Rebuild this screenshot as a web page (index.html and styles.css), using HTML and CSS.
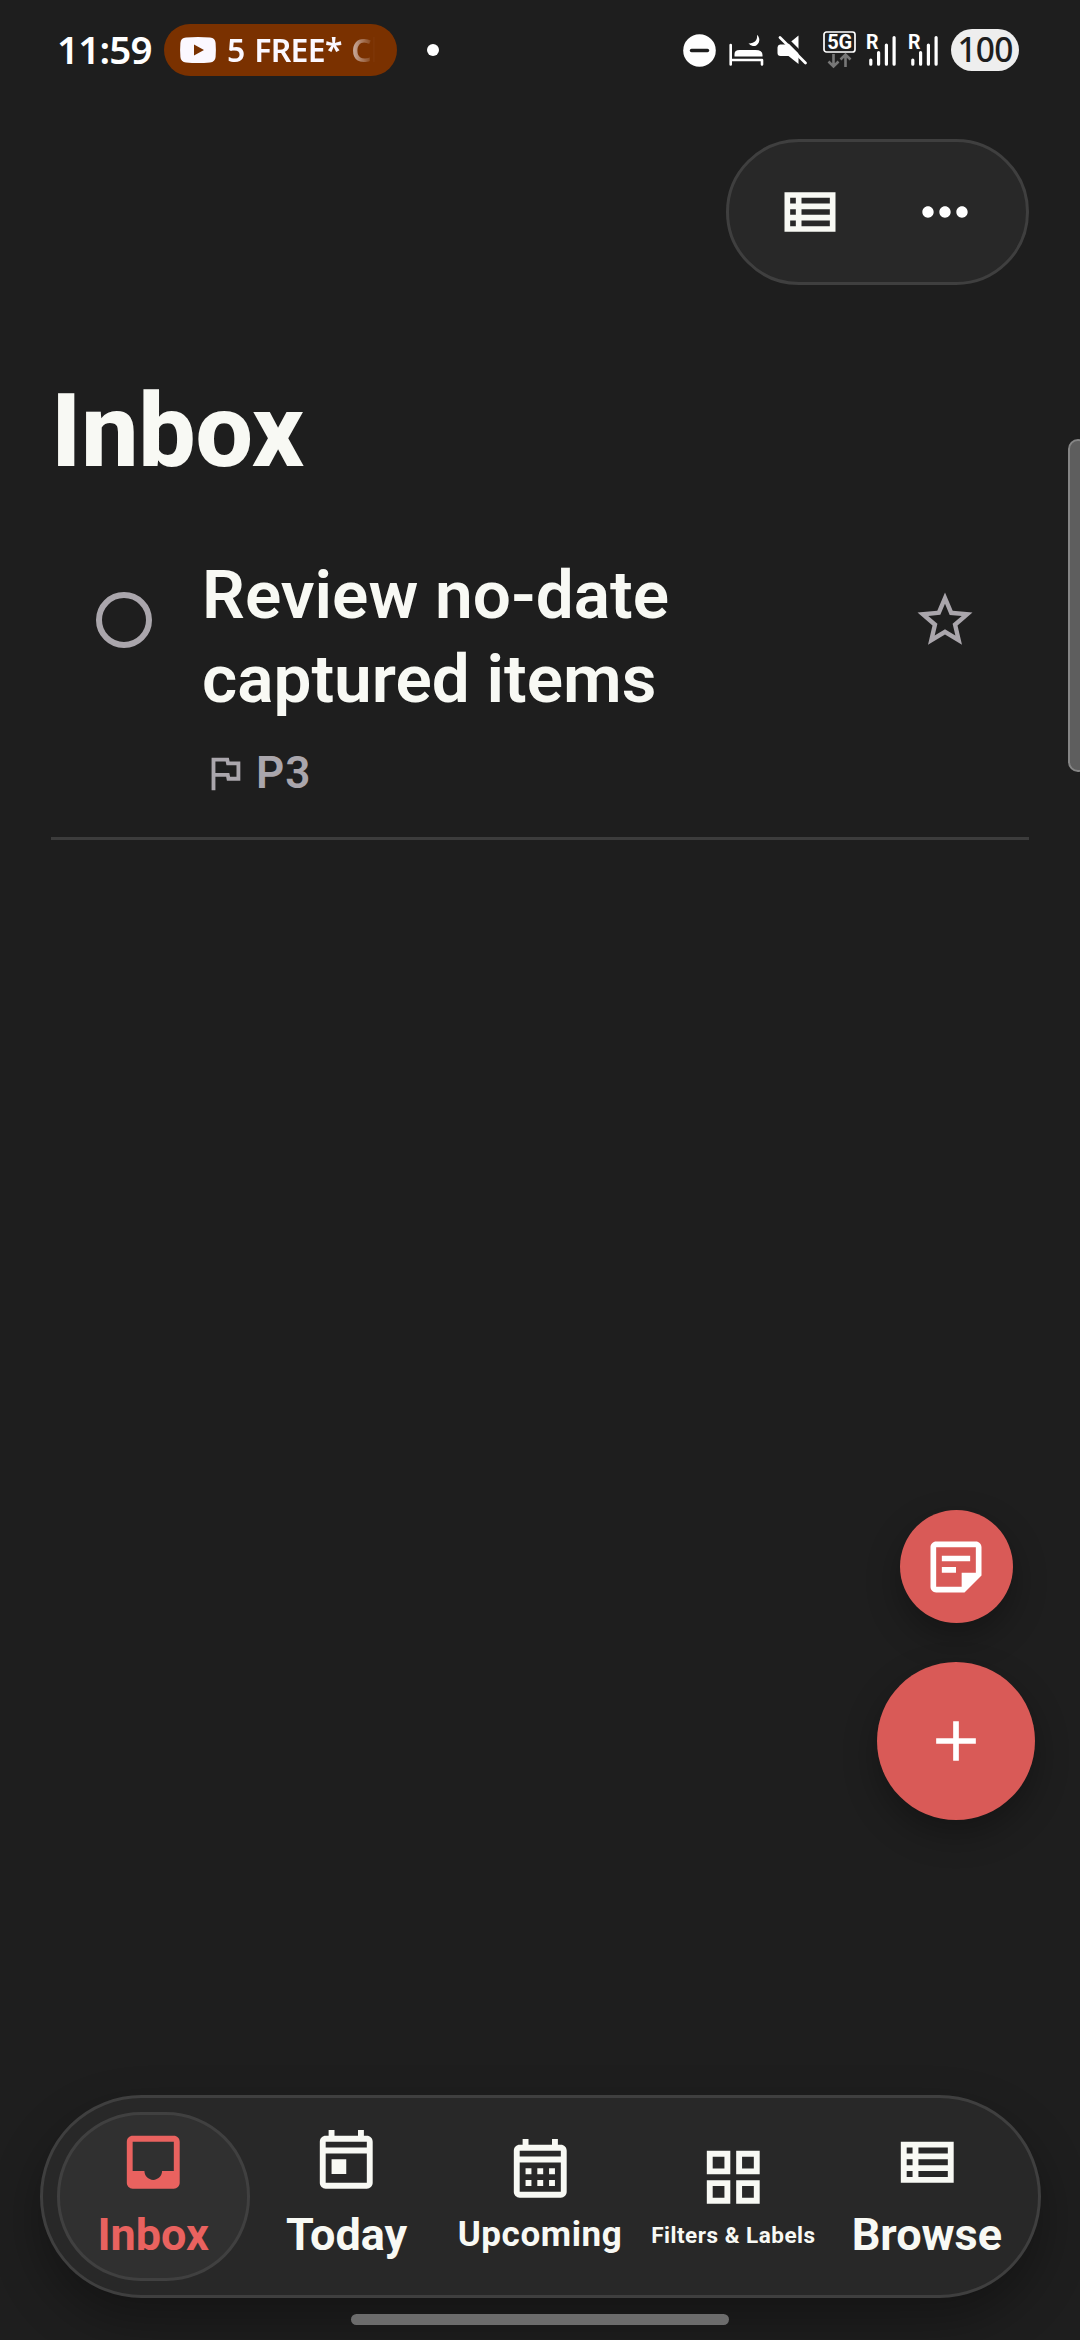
FILE: index.html
```html
<!DOCTYPE html>
<html lang="en">
<head>
<meta charset="utf-8">
<title>Inbox</title>
<link rel="stylesheet" href="styles.css">
</head>
<body>
<div class="screen">
  <header class="status">
    <span class="clock">11:59</span>
    <div class="chip">
      <svg class="chip-icon" viewBox="0 0 36 26"><path fill="#fbf8ff" fill-rule="evenodd" d="M6 .6Q18-.4 30 .6 35.200 1 35.600 6 36.200 13 35.600 20 35.200 25 30 25.400 18 26.400 6 25.400.8 25 .4 20-.2 13 .4 6 .8 1 6 .6zM14 7.500v11l10-5.500z"/></svg>
      <span class="chip-text">5 FREE* Cl</span>
    </div>
    <span class="dot"></span>
    <div class="tray">
      <svg class="dnd" viewBox="0 0 33 33"><circle cx="16.500" cy="16.500" r="16.300" fill="#fff"/><path d="M8.500 16.500h16" stroke="#1e1e1e" stroke-width="3.400" stroke-linecap="round"/></svg>
      <svg class="bed" viewBox="0 0 35 32"><path d="M1.700 11V30.500M1.700 26h31.300M33 26V30.500" fill="none" stroke="#fff" stroke-width="2.600" stroke-linecap="round" stroke-linejoin="round"/><path fill="#fff" d="M5.500 22.500V20q0-4 5-4h16q7 0 7 5v1.500z"/><path fill="#fff" d="M28 .8q3.500 3.500 1.800 7.600-2 4-6 3.600-3-.4-4.300-2.700 4 .5 6.500-1.700 2.500-2.400 2-6.800z"/></svg>
      <svg class="mute" viewBox="0 0 31 31"><path fill="#fff" d="M3 9.500h7.500L21.500.5V29L11.500 21h-8Q.5 21 .5 18v-5.500Q.5 10 3 9.500z"/><path d="M3-2.500 33.500 28" stroke="#1e1e1e" stroke-width="3.400"/><path d="M3 2.500 28.500 28" stroke="#fff" stroke-width="2.800" stroke-linecap="round"/></svg>
      <svg class="net" viewBox="0 0 34 38"><rect x="1" y="1" width="31" height="20" rx="2.500" fill="none" stroke="#fff" stroke-width="1.700"/><text class="net-text" x="16.700" y="17.800" text-anchor="middle">5G</text><path d="M10.500 23v12M5.500 30.500l5 5 5-5M22.500 36V24M17.500 28.500l5-5 5 5" fill="none" stroke="#777" stroke-width="2.600"/></svg>
      <svg class="signal" viewBox="0 0 31 31"><text class="roam" x="0" y="13.500">R</text><path d="M4.800 25v4.200M12.600 17.500v11.700M20.400 10v19.200M28.100 2.500v26.700" stroke="#fff" stroke-width="3.200" stroke-linecap="round"/></svg>
      <svg class="signal second" viewBox="0 0 31 31"><text class="roam" x="0" y="13.500">R</text><path d="M4.800 25v4.200M12.600 17.500v11.700M20.400 10v19.200M28.100 2.500v26.700" stroke="#fff" stroke-width="3.200" stroke-linecap="round"/></svg>
      <span class="battery">100</span>
    </div>
  </header>

  <div class="toolbar">
    <svg class="tool-icon" viewBox="0 0 24 24"><path fill="#f8f9f4" d="M3 5v14h18V5H3zm4 2v2H5V7h2zm-2 6v-2h2v2H5zm0 2h2v2H5v-2zm14 2H9v-2h10v2zm0-4H9v-2h10v2zm0-4H9V7h10v2z"/></svg>
    <svg class="tool-icon" viewBox="0 0 24 24"><path fill="#fff" d="M6 10c-1.100 0-2 .9-2 2s.9 2 2 2 2-.9 2-2-.9-2-2-2zm12 0c-1.100 0-2 .9-2 2s.9 2 2 2 2-.9 2-2-.9-2-2-2zm-6 0c-1.100 0-2 .9-2 2s.9 2 2 2 2-.9 2-2-.9-2-2-2z"/></svg>
  </div>

  <main class="content">
    <h1 class="title">Inbox</h1>
    <article class="task">
      <span class="check"></span>
      <div class="task-body">
        <h2 class="task-title">Review no-date<br>captured items</h2>
        <div class="meta">
          <svg class="flag" viewBox="0 0 24 24"><path fill="#aaa6ac" d="M12.360 6l.4 2H18v6h-3.360l-.4-2H7V6h5.360M14 4H5v17h2v-7h5.600l.4 2h7V6h-5.600L14 4z"/></svg>
          <span class="priority">P3</span>
        </div>
      </div>
      <svg class="star" viewBox="0 0 24 24"><path fill="#aaa6ac" d="M22 9.240l-7.190-.62L12 2 9.190 8.630 2 9.240l5.460 4.730L5.820 21 12 17.270 18.180 21l-1.630-7.030L22 9.240zM12 15.400l-3.760 2.270 1-4.280-3.320-2.880 4.380-.38L12 6.100l1.710 4.040 4.380.38-3.320 2.880 1 4.280L12 15.400z"/></svg>
    </article>
  </main>

  <nav class="tabs">
    <div class="tab active">
      <svg class="tab-icon" viewBox="0 0 24 24"><path fill="currentColor" d="M19 3H5c-1.100 0-2 .9-2 2v14c0 1.100.9 2 2 2h14c1.100 0 2-.9 2-2V5c0-1.100-.9-2-2-2zm0 12h-4c0 1.660-1.350 3-3 3s-3-1.340-3-3H4.990V5H19v10z"/></svg>
      <span class="label">Inbox</span>
    </div>
    <div class="tab">
      <svg class="tab-icon" viewBox="0 0 24 24"><path fill="currentColor" d="M19 3h-1V1h-2v2H8V1H6v2H5c-1.100 0-2 .9-2 2v14c0 1.100.9 2 2 2h14c1.100 0 2-.9 2-2V5c0-1.100-.9-2-2-2zm0 16H5V9h14v10zm0-12H5V5h14v2zM7 11h5v5H7z"/></svg>
      <span class="label">Today</span>
    </div>
    <div class="tab">
      <svg class="tab-icon" viewBox="0 0 24 24"><path fill="currentColor" d="M19 3h-1V1h-2v2H8V1H6v2H5c-1.100 0-2 .9-2 2v14c0 1.100.9 2 2 2h14c1.100 0 2-.9 2-2V5c0-1.100-.9-2-2-2zm0 16H5V9h14v10zm0-12H5V5h14v2zM7 11h2v2H7zm4 0h2v2h-2zm4 0h2v2h-2zM7 15h2v2H7zm4 0h2v2h-2zm4 0h2v2h-2z"/></svg>
      <span class="label medium">Upcoming</span>
    </div>
    <div class="tab">
      <svg class="tab-icon" viewBox="0 0 24 24"><path fill="currentColor" d="M3 3v8h8V3H3zm6 6H5V5h4v4zm-6 4v8h8v-8H3zm6 6H5v-4h4v4zm4-16v8h8V3h-8zm6 6h-4V5h4v4zm-6 4v8h8v-8h-8zm6 6h-4v-4h4v4z"/></svg>
      <span class="label small">Filters &amp; Labels</span>
    </div>
    <div class="tab">
      <svg class="tab-icon" viewBox="0 0 24 24"><path fill="currentColor" d="M3 5v14h18V5H3zm4 2v2H5V7h2zm-2 6v-2h2v2H5zm0 2h2v2H5v-2zm14 2H9v-2h10v2zm0-4H9v-2h10v2zm0-4H9V7h10v2z"/></svg>
      <span class="label">Browse</span>
    </div>
  </nav>
  <div class="home-bar"></div>

  <div class="fabs">
    <div class="fab note">
      <svg class="fab-icon" viewBox="0 0 24 24"><path fill="#fff" d="M19 5v9h-5v5H5V5h14m0-2H5c-1.100 0-2 .9-2 2v14c0 1.100.9 2 2 2h10l6-6V5c0-1.100-.9-2-2-2zm-7 11H7v-2h5v2zm5-4H7V8h10v2z"/></svg>
    </div>
    <div class="fab add">
      <svg class="fab-icon" viewBox="0 0 24 24"><path fill="#fff" d="M19 13h-6v6h-2v-6H5v-2h6V5h2v6h6v2z"/></svg>
    </div>
  </div>
  <div class="edge-handle"></div>
</div>
</body>
</html>
```
FILE: styles.css
```css
* { box-sizing: border-box; }
body { margin: 0; background: #1e1e1e; }
svg { display: block; flex: none; overflow: visible; }

.screen {
  position: relative;
  display: flex;
  flex-direction: column;
  width: 1080px;
  height: 2340px;
  overflow: hidden;
  background: #1e1e1e;
  color: #f8f9f4;
  font-family: Roboto, sans-serif;
}

/* Status bar */
.status {
  display: flex;
  align-items: center;
  height: 100px;
  padding: 0 61px 0 57px;
  color: #fff;
  font-family: "Noto Sans", sans-serif;
}
.clock { width: 107px; font-size: 38.5px; font-weight: 600; line-height: 52px; letter-spacing: -0.8px; white-space: nowrap; transform: translateY(-1px); }
.chip {
  display: flex;
  align-items: center;
  gap: 11px;
  width: 233px;
  height: 52px;
  padding: 0 22px 0 16px;
  border-radius: 26px;
  background: #7a3100;
}
.chip-icon { width: 36px; height: 26px; }
.chip-text {
  flex: 1;
  overflow: hidden;
  color: #fbf8ff;
  font-size: 32px;
  font-weight: 600;
  line-height: 52px;
  letter-spacing: -0.7px;
  word-spacing: 2px;
  white-space: nowrap;
  -webkit-mask-image: linear-gradient(90deg, #000 76%, transparent);
  mask-image: linear-gradient(90deg, #000 76%, transparent);
}
.dot { width: 12px; height: 12px; margin-left: 30px; border-radius: 50%; background: #fff; }
.tray { display: flex; align-items: center; margin-left: auto; }
.dnd { width: 33px; height: 33px; }
.bed { width: 35px; height: 32px; margin-left: 13px; }
.mute { width: 31px; height: 31px; margin-left: 13px; }
.net { width: 34px; height: 38px; margin: -1px 0 0 15px; }
.signal { width: 31px; height: 31px; margin-left: 9px; }
.second { margin-left: 11px; }
.net-text { fill: #fff; font: 700 20px Roboto, sans-serif; }
.roam { fill: #fff; font: 700 19.5px Roboto, sans-serif; }
.battery {
  width: 68px;
  height: 42px;
  margin-left: 12px;
  border-radius: 21px;
  background: #eee;
  color: #1e1e1e;
  font-size: 33.5px;
  font-weight: 500;
  line-height: 41px;
  letter-spacing: -0.8px;
  text-align: center;
}

/* Header actions */
.toolbar {
  display: flex;
  align-items: center;
  align-self: flex-end;
  justify-content: space-between;
  width: 303px;
  height: 146px;
  margin: 39px 51px 0 0;
  padding: 0 47px;
  border: 3px solid #3f3f3f;
  border-radius: 73px;
  background: #282828;
}
.tool-icon { width: 68px; height: 68px; }

/* Task list */
.content { flex: 1; padding: 0 51px; }
.title { margin: 86px 0 0; font-size: 102px; font-weight: 800; line-height: 120px; letter-spacing: -0.2px; }
.task {
  display: flex;
  height: 349px;
  padding: 62px 51px 0 45px;
  border-bottom: 3px solid #3c3c3c;
}
.check { flex: none; width: 56px; height: 56px; margin-top: 39px; border: 6px solid #aaa6ac; border-radius: 50%; }
.task-body { flex: 1; padding-left: 50px; }
.task-title { margin: 0; font-size: 67.5px; font-weight: 600; line-height: 84px; }
.meta { display: flex; align-items: center; gap: 8px; margin-top: 26px; height: 52px; }
.flag { width: 46px; height: 46px; }
.priority { color: #aaa6ac; font-size: 44px; font-weight: 600; line-height: 52px; letter-spacing: 1px; }
.star { width: 66px; height: 66px; margin-top: 34px; }

/* Bottom navigation */
.tabs {
  display: flex;
  width: 1001px;
  height: 203px;
  margin: 0 0 0 39.5px;
  padding: 14px;
  border: 3px solid #3f3f3f;
  border-radius: 101.5px;
  background: #282828;
  box-shadow: 0 22px 50px rgba(0, 0, 0, 0.32);
}
.tab {
  display: flex;
  flex: 1 1 0;
  flex-direction: column;
  align-items: center;
  justify-content: center;
  gap: 8px;
  min-width: 0;
  border: 3px solid transparent;
  border-radius: 84px;
}
.active { border-color: #404040; background: #303030; color: #e9625f; }
.tab-icon { width: 70.5px; height: 70.5px; }
.label { padding-bottom: 1px; font-size: 45px; font-weight: 700; line-height: 60px; white-space: nowrap; }
.medium { font-size: 35px; line-height: 42px; letter-spacing: 0.6px; }
.small { font-size: 22.5px; line-height: 30px; letter-spacing: 0.5px; }
.home-bar { z-index: 1; width: 378px; height: 11px; margin: 16px auto 15px; border-radius: 6px; background: #6c6c6c; }

/* Floating buttons */
.fabs { position: absolute; top: 1510px; right: 45px; display: flex; flex-direction: column; align-items: center; gap: 39px; }
.fab { display: flex; align-items: center; justify-content: center; border-radius: 50%; background: #d95a57; }
.note { width: 113px; height: 113px; box-shadow: 0 14px 34px rgba(0, 0, 0, 0.3); }
.add { width: 158px; height: 158px; box-shadow: 0 14px 34px rgba(0, 0, 0, 0.3); }
.fab-icon { width: 68px; height: 68px; }

/* System edge panel handle */
.edge-handle {
  position: absolute;
  top: 439px;
  right: -8px;
  width: 20px;
  height: 333px;
  border: 2px solid #858585;
  border-radius: 13px;
  background: #5e5e5e;
}
```
